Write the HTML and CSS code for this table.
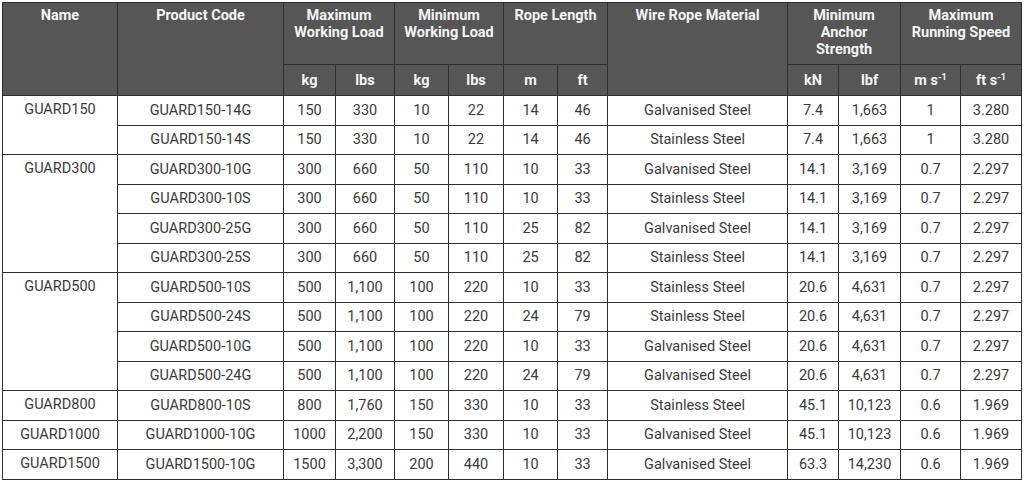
FILE: index.html
```html
<!DOCTYPE html>
<html>
<head>
<meta charset="utf-8">
<link rel="stylesheet" href="styles.css">
</head>
<body>
<table class="spec">
  <colgroup>
    <col class="c-name"><col class="c-code"><col class="c-kg1"><col class="c-lbs1"><col class="c-kg2"><col class="c-lbs2"><col class="c-m"><col class="c-ft"><col class="c-mat"><col class="c-kn"><col class="c-lbf"><col class="c-ms"><col class="c-fts">
  </colgroup>
  <thead>
    <tr class="hrow1">
      <th rowspan="2">Name</th>
      <th rowspan="2">Product Code</th>
      <th colspan="2">Maximum<br>Working Load</th>
      <th colspan="2">Minimum<br>Working Load</th>
      <th colspan="2">Rope Length</th>
      <th rowspan="2">Wire Rope Material</th>
      <th colspan="2">Minimum<br>Anchor<br>Strength</th>
      <th colspan="2">Maximum<br>Running Speed</th>
    </tr>
    <tr class="hrow2">
      <th class="unit">kg</th><th class="unit">lbs</th>
      <th class="unit">kg</th><th class="unit">lbs</th>
      <th class="unit">m</th><th class="unit">ft</th>
      <th class="unit">kN</th><th class="unit">lbf</th>
      <th class="unit">m s<sup>-1</sup></th><th class="unit">ft s<sup>-1</sup></th>
    </tr>
  </thead>
  <tbody>
    <tr><td class="name" rowspan="2">GUARD150</td><td>GUARD150-14G</td><td>150</td><td>330</td><td>10</td><td>22</td><td>14</td><td>46</td><td>Galvanised Steel</td><td>7.4</td><td>1,663</td><td>1</td><td>3.280</td></tr>
    <tr><td>GUARD150-14S</td><td>150</td><td>330</td><td>10</td><td>22</td><td>14</td><td>46</td><td>Stainless Steel</td><td>7.4</td><td>1,663</td><td>1</td><td>3.280</td></tr>
    <tr><td class="name" rowspan="4">GUARD300</td><td>GUARD300-10G</td><td>300</td><td>660</td><td>50</td><td>110</td><td>10</td><td>33</td><td>Galvanised Steel</td><td>14.1</td><td>3,169</td><td>0.7</td><td>2.297</td></tr>
    <tr><td>GUARD300-10S</td><td>300</td><td>660</td><td>50</td><td>110</td><td>10</td><td>33</td><td>Stainless Steel</td><td>14.1</td><td>3,169</td><td>0.7</td><td>2.297</td></tr>
    <tr><td>GUARD300-25G</td><td>300</td><td>660</td><td>50</td><td>110</td><td>25</td><td>82</td><td>Galvanised Steel</td><td>14.1</td><td>3,169</td><td>0.7</td><td>2.297</td></tr>
    <tr><td>GUARD300-25S</td><td>300</td><td>660</td><td>50</td><td>110</td><td>25</td><td>82</td><td>Stainless Steel</td><td>14.1</td><td>3,169</td><td>0.7</td><td>2.297</td></tr>
    <tr><td class="name" rowspan="4">GUARD500</td><td>GUARD500-10S</td><td>500</td><td>1,100</td><td>100</td><td>220</td><td>10</td><td>33</td><td>Stainless Steel</td><td>20.6</td><td>4,631</td><td>0.7</td><td>2.297</td></tr>
    <tr><td>GUARD500-24S</td><td>500</td><td>1,100</td><td>100</td><td>220</td><td>24</td><td>79</td><td>Stainless Steel</td><td>20.6</td><td>4,631</td><td>0.7</td><td>2.297</td></tr>
    <tr><td>GUARD500-10G</td><td>500</td><td>1,100</td><td>100</td><td>220</td><td>10</td><td>33</td><td>Galvanised Steel</td><td>20.6</td><td>4,631</td><td>0.7</td><td>2.297</td></tr>
    <tr><td>GUARD500-24G</td><td>500</td><td>1,100</td><td>100</td><td>220</td><td>24</td><td>79</td><td>Galvanised Steel</td><td>20.6</td><td>4,631</td><td>0.7</td><td>2.297</td></tr>
    <tr><td class="name">GUARD800</td><td>GUARD800-10S</td><td>800</td><td>1,760</td><td>150</td><td>330</td><td>10</td><td>33</td><td>Stainless Steel</td><td>45.1</td><td>10,123</td><td>0.6</td><td>1.969</td></tr>
    <tr><td class="name">GUARD1000</td><td>GUARD1000-10G</td><td>1000</td><td>2,200</td><td>150</td><td>330</td><td>10</td><td>33</td><td>Galvanised Steel</td><td>45.1</td><td>10,123</td><td>0.6</td><td>1.969</td></tr>
    <tr><td class="name">GUARD1500</td><td>GUARD1500-10G</td><td>1500</td><td>3,300</td><td>200</td><td>440</td><td>10</td><td>33</td><td>Galvanised Steel</td><td>63.3</td><td>14,230</td><td>0.6</td><td>1.969</td></tr>
  </tbody>
</table>
</body>
</html>
```

FILE: styles.css
```css
html, body {
  margin: 0;
  padding: 0;
  background: #ffffff;
}
body {
  padding: 2px 0 0 2px;
  font-family: Roboto, "Liberation Sans", sans-serif;
}
.spec {
  border-collapse: collapse;
  table-layout: fixed;
  width: 1019px;
  font-size: 14.5px;
  color: #3a3a3a;
}
.c-name { width: 115px; }
.c-code { width: 166px; }
.c-kg1 { width: 52px; }
.c-lbs1 { width: 59px; }
.c-kg2 { width: 54px; }
.c-lbs2 { width: 55px; }
.c-m { width: 54px; }
.c-ft { width: 50px; }
.c-mat { width: 180px; }
.c-kn { width: 51px; }
.c-lbf { width: 62px; }
.c-ms { width: 60px; }
.c-fts { width: 61px; }

.spec th, .spec td {
  border: 1px solid #2e2e2e;
  text-align: center;
  padding: 0;
}
.spec th {
  background: #565656;
  color: #f4f4f4;
  font-weight: 700;
  line-height: 17px;
  vertical-align: top;
  padding-top: 4px;
}
.hrow1 { height: 62px; }
.hrow2 { height: 31px; }
.spec th.unit {
  vertical-align: middle;
  padding-top: 0;
}
.spec sup {
  font-size: 9px;
  line-height: 0;
  vertical-align: 5px;
}
.spec tbody tr { height: 29.5px; }
.spec td {
  vertical-align: middle;
  line-height: 17px;
}
.spec td.name {
  vertical-align: top;
  padding-top: 5px;
}
```
